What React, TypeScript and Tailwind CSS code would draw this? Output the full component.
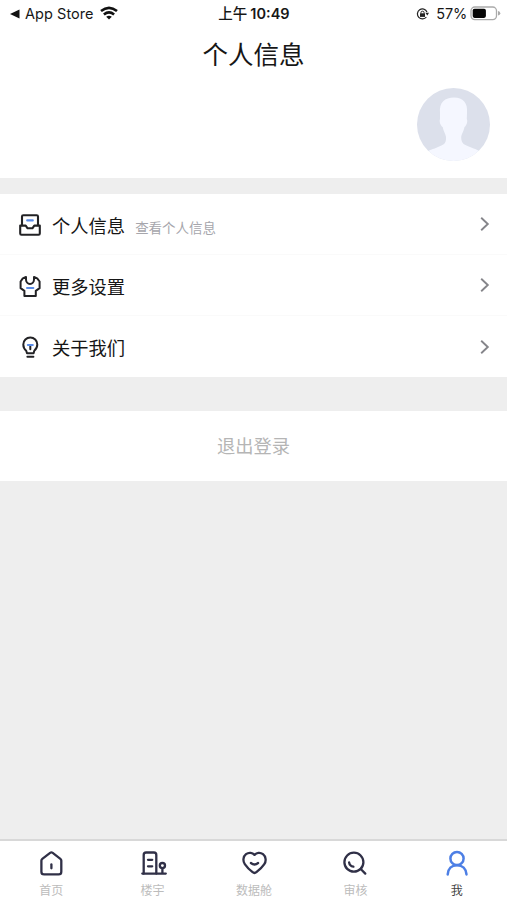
import { ReactNode } from "react";

const menuItems = [
  { label: "个人信息", hint: "查看个人信息", icon: <InboxIcon /> },
  { label: "更多设置", hint: "", icon: <ShirtIcon /> },
  { label: "关于我们", hint: "", icon: <BulbIcon /> },
];

const tabs = [
  { label: "首页", icon: <HomeIcon /> },
  { label: "楼宇", icon: <BuildingIcon /> },
  { label: "数据舱", icon: <HeartIcon /> },
  { label: "审核", icon: <SearchIcon /> },
  { label: "我", icon: <UserIcon />, active: true },
];

function InboxIcon() {
  return (
    <svg width="24" height="24" viewBox="0 0 24 24" fill="none" stroke="#222225" strokeWidth="2.1" strokeLinejoin="round" strokeLinecap="round">
      <path d="M4 11.3V2.6Q4 1.3 5.3 1.3H18.7Q20 1.3 20 2.6V11.3" />
      <path d="M2.2 11.6H7.7L9.6 14.3H14.4L16.3 11.6H21.8V19.5Q21.8 20.8 20.6 20.8H3.4Q2.2 20.8 2.2 19.5Z" />
      <path d="M9.2 6.4H14.8" stroke="#5b8de8" />
    </svg>
  );
}

function ShirtIcon() {
  return (
    <svg width="24" height="24" viewBox="0 0 24 24" fill="none" stroke="#222225" strokeWidth="2" strokeLinejoin="round" strokeLinecap="round">
      <path d="M8 2L4.8 3.4L2.6 6.5V13.2L6.4 15.8V21H17.8V15.8L21.6 13.2V6.5L19.2 3.4L16 2V4.5C16 6.8 14.2 8.9 12 8.9C9.8 8.9 8 6.8 8 4.5Z" />
      <path d="M9 12.9H15.4" stroke="#5b8de8" />
    </svg>
  );
}

function BulbIcon() {
  return (
    <svg width="24" height="24" viewBox="0 0 24 24" fill="none" stroke="#222225" strokeWidth="2" strokeLinejoin="round" strokeLinecap="round">
      <path d="M9 17.2L8.2 14.8C6.4 13.2 5.3 10.9 5.3 8.5A7 7 0 0 1 19.3 8.5C19.3 10.9 18.1 13.2 16.3 14.8L15.6 17.2Z" />
      <path d="M9.4 20.8H15.4" />
      <path d="M12.3 9.8V13.2" />
      <path d="M9.8 8.9H14.8" stroke="#5b8de8" />
    </svg>
  );
}

function HomeIcon() {
  return (
    <svg width="28" height="28" viewBox="0 0 28 28" fill="none" stroke="#303047" strokeWidth="2.3" strokeLinejoin="round" strokeLinecap="round">
      <path d="M4.4 10.6Q4.4 9.5 5.3 8.8L13.1 2.9Q14.4 2 15.7 2.9L23.4 8.8Q24.3 9.5 24.3 10.6V21.7Q24.3 24.4 21.6 24.4H7.1Q4.4 24.4 4.4 21.7Z" />
      <path d="M14.4 14.4V18.3" />
    </svg>
  );
}

function BuildingIcon() {
  return (
    <svg width="28" height="28" viewBox="0 0 28 28" fill="none" stroke="#303047" strokeWidth="2.3" strokeLinejoin="round" strokeLinecap="round">
      <path d="M4.7 23.5V4.9Q4.7 2.5 7.1 2.5H14.9Q17.3 2.5 17.3 4.9V23.5" />
      <path d="M3.3 23.6H26.8M9 9.8H13.2M9 16.3H13.2M23.4 18.5V23" />
      <circle cx="23.4" cy="15.6" r="2.6" />
    </svg>
  );
}

function HeartIcon() {
  return (
    <svg width="28" height="28" viewBox="0 0 28 28" fill="none" stroke="#303047" strokeWidth="2.3" strokeLinejoin="round" strokeLinecap="round">
      <path d="M14.5 4.9C12.5 2.6 8.8 2.1 6 4.2C3.1 6.5 2.6 11 4.8 14.1C6.7 16.9 9.8 20 12.6 22.2Q14.5 23.7 16.4 22.2C19.2 20 22.4 16.9 24.3 14.1C26.5 11 25.9 6.5 23 4.2C20.2 2.1 16.5 2.6 14.5 4.9Z" />
      <path d="M10.9 13Q14.5 16 18.1 13" />
    </svg>
  );
}

function SearchIcon() {
  return (
    <svg width="28" height="28" viewBox="0 0 28 28" fill="none" stroke="#303047" strokeWidth="2.3" strokeLinejoin="round" strokeLinecap="round">
      <circle cx="12.9" cy="12.2" r="9.5" />
      <path d="M19.7 19L24.3 23.6M8.1 12.4Q8.6 16.1 12.4 16.7" />
    </svg>
  );
}

function UserIcon() {
  return (
    <svg width="28" height="28" viewBox="0 0 28 28" fill="none" stroke="#4d7fe5" strokeWidth="2.5" strokeLinecap="round">
      <circle cx="14" cy="8.5" r="6.6" />
      <path d="M4.7 24.4C5 18.9 8.6 15.2 14 15.2C19.4 15.2 23.1 18.9 23.5 24.4" />
    </svg>
  );
}

function StatusBar() {
  return (
    <div className="grid h-7 grid-cols-[1fr_auto_1fr] items-center pr-1.5 pl-2.5 text-[14.5px] leading-none text-[#171717]">
      <div className="flex items-center">
        <svg width="10" height="10" viewBox="0 0 10 10" fill="#111">
          <path d="M0 5L9.5 0.5V9.5Z" />
        </svg>
        <span className="ml-[5px] tracking-[0.05px]">App Store</span>
        <svg className="-mt-0.5 ml-1.5" width="18" height="14" viewBox="0 0 18 14" fill="none" stroke="#111" strokeWidth="2.6">
          <path d="M1 5.1Q9 -1.4 17 5.1M3.9 8.4Q9 4.2 14.1 8.4" />
          <path d="M6.2 10.7Q9 8.6 11.8 10.7L9 13.6Z" fill="#111" stroke="none" />
        </svg>
      </div>
      <div className="pr-[3px] font-semibold">
        <span className="font-medium">上午</span>
        <span className="ml-[3px]">10:49</span>
      </div>
      <div className="flex items-center justify-end">
        <svg width="13" height="12" viewBox="0 0 13 12" fill="none" stroke="#222" strokeWidth="1.2">
          <path d="M11 3.9A5 5 0 1 0 10.4 9" />
          <path d="M9.4 4.8H13L11.3 7.6Z" fill="#222" stroke="none" />
          <rect x="4" y="5.3" width="5" height="3.6" fill="#222" stroke="none" />
          <path d="M5 5.5V4.3Q5 3.2 6.5 3.2T8 4.3V5.5" strokeWidth="1" />
        </svg>
        <span className="mr-[3px] ml-[7px] tracking-[-0.2px]">57%</span>
        <svg className="-mt-px" width="31" height="15" viewBox="0 0 31 15" fill="none">
          <rect x="1" y="1" width="25.5" height="12.6" rx="3.8" stroke="#aaa" strokeWidth="1.3" />
          <rect x="2.7" y="2.7" width="13.2" height="9.2" rx="1.8" fill="#050505" />
          <path d="M28 5Q30.3 5.6 30.3 7.3T28 9.6Z" fill="#aaa" />
        </svg>
      </div>
    </div>
  );
}

function Avatar() {
  return (
    <svg className="rounded-full" width="73" height="73" viewBox="0 0 73 73">
      <rect width="73" height="73" fill="#dce0eb" />
      <path d="M23 25C22 14 28 9.5 37 9.5C46 9.5 51 15 50 25L49.8 31C51 33 49.5 38 47.5 39C46.5 44 44.5 46 44.2 49C44 56 48 57 53 59C58 61 62 62 66 66V73H7V66C11 62 17 61 21 59C26 57 29.5 56 29 49C28.7 46 26.7 44 25.7 39C23.5 38 22 33 23 31Z" fill="#f5f7ff" />
    </svg>
  );
}

function MenuRow({ icon, label, hint }: { icon: ReactNode; label: string; hint: string }) {
  return (
    <div className="flex h-[61px] items-center pt-[3px] pr-4 pl-[18px]">
      {icon}
      <span className="ml-2.5 text-[18.3px] leading-6 text-[#161616]">{label}</span>
      {hint && <span className="mt-1.5 ml-2.5 text-[13.5px] text-[#a6a6ac]">{hint}</span>}
      <svg className="mb-[3px] ml-auto" width="12" height="16" viewBox="0 0 12 16" fill="none" stroke="#85858a" strokeWidth="1.9">
        <path d="M2.2 1.8L8.8 8L2.2 14.2" />
      </svg>
    </div>
  );
}

function App() {
  return (
    <div className="flex h-[900px] w-[507px] flex-col overflow-hidden bg-[#eeeeee] font-[Inter,'Noto_Sans_CJK_SC',sans-serif]">
      <header className="h-[178px] bg-white">
        <StatusBar />
        <h1 className="mt-[9px] text-center text-[25.5px] leading-9 text-[#161616]">个人信息</h1>
        <div className="mt-[15px] flex justify-end pr-[17px]">
          <Avatar />
        </div>
      </header>

      <main className="flex-1">
        <div className="mt-4 divide-y divide-[#fafafa] bg-white">
          {menuItems.map((item) => (
            <MenuRow key={item.label} {...item} />
          ))}
        </div>
        <button className="mt-[34px] block h-[70px] w-full bg-white pt-0.5 text-[18.3px] text-[#b5b5b5]">
          退出登录
        </button>
      </main>

      <nav className="grid h-[61px] grid-cols-5 border-t-2 border-[#d8d8d8] bg-white">
        {tabs.map((tab) => (
          <div key={tab.label} className="flex flex-col items-center pt-[9px] pl-px">
            {tab.icon}
            <span className={`mt-1 text-xs leading-[18px] ${tab.active ? "text-[#444]" : "text-[#bcbcbc]"}`}>
              {tab.label}
            </span>
          </div>
        ))}
      </nav>
    </div>
  );
}

export default App;
